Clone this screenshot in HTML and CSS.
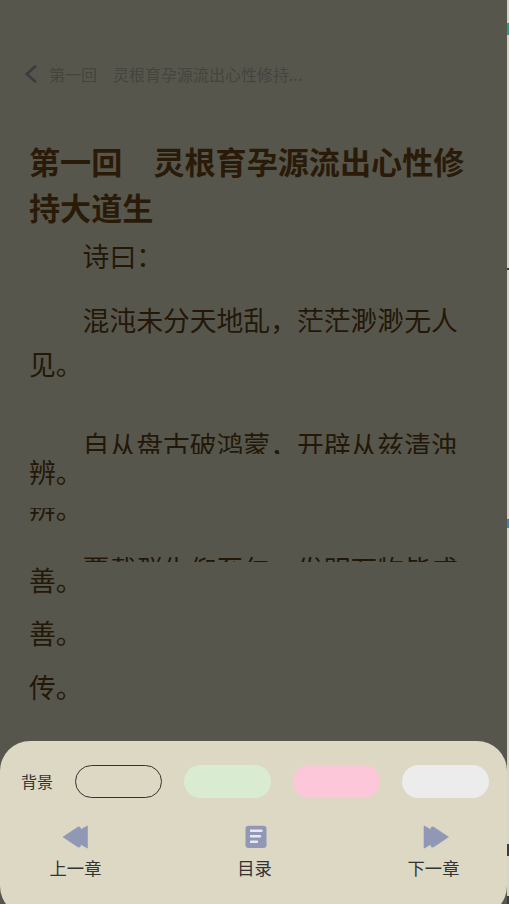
FILE: index.html
```html
<!DOCTYPE html>
<html lang="zh">
<head>
<meta charset="utf-8">
<title>第一回</title>
<link rel="stylesheet" href="styles.css">
</head>
<body>
<div class="screen">
  <main class="reader">
    <header class="topbar">
      <svg class="back" viewBox="0 0 14 18" width="14" height="18"><path d="M12 .8 2.800 9l9.200 8.200" fill="none" stroke="#3c3b3f" stroke-width="2.600"/></svg>
      <span class="crumb">第一回　灵根育孕源流出心性修持...</span>
    </header>
    <h1 class="title">第一回　灵根育孕源流出心性修持大道生</h1>
    <p class="para first">诗曰：</p>
    <p class="para gap20">混沌未分天地乱，茫茫渺渺无人见。</p>
    <div class="clip c1"><p class="para">自从盘古破鸿蒙，开辟从兹清浊</p></div>
    <p class="line l1">辨。</p>
    <div class="clip c2"><p class="line">辨。</p></div>
    <div class="clip c3"><p class="para">覆载群生仰至仁，发明万物皆成</p></div>
    <p class="line l2">善。</p>
    <p class="line l3">善。</p>
    <p class="line l4">传。</p>
  </main>
  <aside class="edge">
    <i class="mark m1"></i><i class="mark m2"></i><i class="mark m3"></i><i class="mark m4"></i><i class="mark m5"></i>
  </aside>
  <section class="panel">
    <div class="bg-row">
      <span class="bg-label">背景</span>
      <button class="swatch s1"></button>
      <button class="swatch s2"></button>
      <button class="swatch s3"></button>
      <button class="swatch s4"></button>
    </div>
    <nav class="nav-row">
      <a class="nav-item">
        <svg class="icon" viewBox="0 0 26 24" width="26" height="24"><path d="M0 12 15 2h2l1 2.500L24 1h.500V23H24l-6-3.500L17 22h-2Z" fill="#9198b5" stroke="#9198b5" stroke-width=".6" stroke-linejoin="round"/></svg>
        <span>上一章</span>
      </a>
      <a class="nav-item">
        <svg class="icon" viewBox="0 0 26 24" width="26" height="24"><rect x="3.500" y="0.700" width="21" height="22.300" rx="3" fill="#9198b5"/><path d="M9 5.700h10.500M9 11.300h9M9 16.700h6" stroke="#e8e8ee" stroke-width="2.400" stroke-linecap="round"/></svg>
        <span>目录</span>
      </a>
      <a class="nav-item">
        <svg class="icon next" viewBox="0 0 26 24" width="26" height="24"><path d="M25.500 12 10.500 2h-2l-1 2.500L1.500 1H1V23h.500l6-3.500L8.500 22h2Z" fill="#9198b5" stroke="#9198b5" stroke-width=".6" stroke-linejoin="round"/></svg>
        <span>下一章</span>
      </a>
    </nav>
  </section>
</div>
</body>
</html>
```
FILE: styles.css
```css
* { box-sizing: border-box; }
html, body { margin: 0; padding: 0; height: 100%; }
body { font-family: "Noto Sans CJK SC", "Noto Sans", sans-serif; background: #57564d; }
.screen { position: relative; width: 509px; height: 904px; overflow: hidden; display: flex; background: #57564d; }
.reader { flex: 1; min-width: 0; padding: 61px 37px 0 29px; color: #231808; }
.topbar { display: flex; align-items: center; height: 26px; margin-left: -5.500px; }
.back { flex: none; margin-right: 11.500px; }
.crumb { font-size: 16px; line-height: 26px; color: #45443e; white-space: nowrap; }
.title { margin: 51px 0 0; font-size: 31.100px; line-height: 46px; font-weight: 700; color: #2a1b09; }
.para { margin: 0; font-size: 26.800px; line-height: 44px; text-indent: 2em; }
.line { margin: 0; font-size: 26.800px; line-height: 44px; }
.first { margin-top: 4px; }
.gap20 { margin-top: 20px; }
.clip { overflow: hidden; }
.c1 { height: 31px; margin-top: 37px; }
.l1 { margin-top: -4px; }
.c2 { height: 23px; margin-top: 14px; }
.c2 .line { margin-top: -22px; }
.c3 { height: 5px; margin-top: 26px; }
.c3 .para { margin-top: -10px; }
.l2 { margin-top: -4px; }
.l3 { margin-top: 9px; }
.l4 { margin-top: 10px; }
.edge { position: relative; flex: none; width: 2px; background: #d6d3c8; }
.mark { position: absolute; left: 0; width: 2px; }
.m1 { top: 23px; height: 12px; background: #2f9e7c; }
.m2 { top: 268px; height: 2px; background: #3c3b3f; }
.m3 { top: 519px; height: 9px; background: #4a7fb5; }
.m4 { top: 844px; height: 12px; background: #3c3b3f; }
.m5 { top: 896px; height: 8px; background: #3c3b3f; }
.panel { position: absolute; left: 0; top: 741px; width: 507px; height: 175px; padding: 24px 18px 0 21px; background: #ddd8c4; border-radius: 30px; }
.bg-row { display: flex; align-items: center; }
.bg-label { font-size: 16px; line-height: 33px; width: 54px; color: #333; }
.swatch { width: 87.500px; height: 33px; border: 0; padding: 0; margin-right: 21.700px; border-radius: 17px; }
.swatch:last-child { margin-right: 0; }
.s1 { background: #ddd8c4; border: 1px solid #333; }
.s2 { background: #d9ecd2; }
.s3 { background: #fcc7d8; }
.s4 { background: #ececec; }
.nav-row { display: flex; justify-content: space-between; margin: 27px 0 0 29.500px; width: 408px; }
.nav-item { display: flex; flex-direction: column; align-items: center; width: 50px; color: #333; }
.nav-item span { font-size: 17.300px; line-height: 24px; margin-top: 7px; white-space: nowrap; }
.icon { display: block; }
.next { margin-left: 4px; }
```
